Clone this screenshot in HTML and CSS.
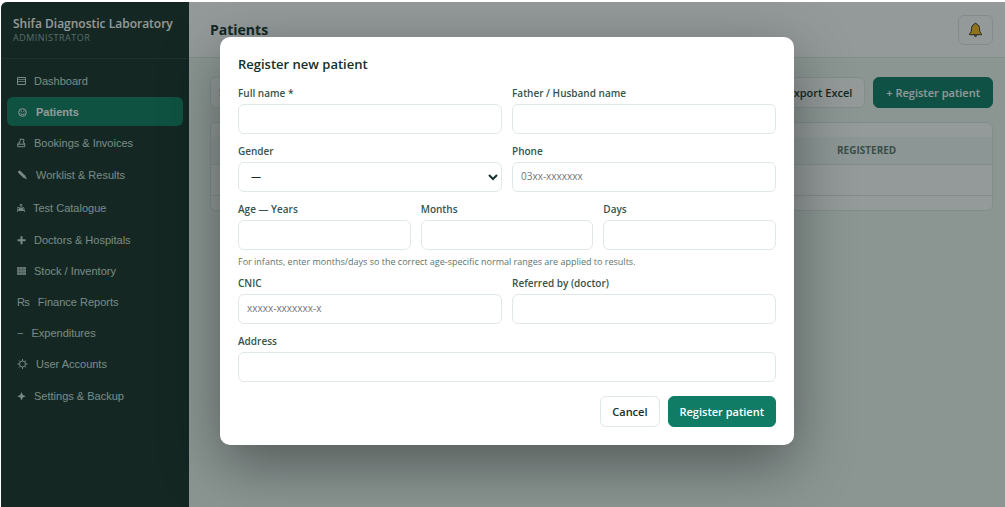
FILE: index.html
```
<!DOCTYPE html>
<html lang="en">
<head>
    <meta charset="UTF-8">
    <meta name="viewport" content="width=device-width, initial-scale=1.0">
    <title>Patients - Shifa Diagnostic Laboratory</title>
    <link rel="stylesheet" href="styles.css">
</head>
<body>
    <div class="app">
        <aside class="sidebar">
            <div class="brand">
                <div class="brand-name">Shifa Diagnostic Laboratory</div>
                <div class="brand-role">Administrator</div>
            </div>
            <nav class="nav">
                <a href="#" class="nav-link">
                    <svg width="9" height="10" viewBox="0 0 9 10" fill="none" stroke="currentColor"><path d="M.5 1.500h8v7h-8z"/><path d="M1 3.500h7M1 5.500h7" stroke-opacity=".75"/></svg>
                    Dashboard
                </a>
                <a href="#" class="nav-link active">
                    <svg width="11" height="10" viewBox="0 0 11 10" fill="none" stroke="currentColor"><circle cx="5.500" cy="5.500" r="3.800"/><path d="M3.500 6.300c.9 1.500 3.100 1.500 4 0"/><path d="M3.700 4.300h1M6.300 4.300h1"/></svg>
                    Patients
                </a>
                <a href="#" class="nav-link">
                    <svg width="9" height="10" viewBox="0 0 9 10" fill="none" stroke="currentColor"><path d="M2.500 5.500l1-4.500 3.500.5-.8 4"/><path d="M2.300 4L.7 6v2.700h7V6L7 4.500M.7 6.200h7"/></svg>
                    Bookings &amp; Invoices
                </a>
                <a href="#" class="nav-link tall">
                    <svg width="11" height="10" viewBox="0 0 11 10" fill="currentColor"><path d="M1 1.200l2-.6 5.300 5.200L10 9.300 6.300 7.800 1.200 2.800z"/></svg>
                    Worklist &amp; Results
                </a>
                <a href="#" class="nav-link tall">
                    <svg width="8" height="10" viewBox="0 0 8 10" fill="none" stroke="currentColor" stroke-width=".8"><path d="M2.800 1.500h2.400M3.300 1.500v2.300L1.500 7.500h5L4.700 3.800V1.500M.3 4.500h2.200M1 4.500L.4 9M5.500 4.500h1.300L7.600 9"/><path d="M2.600 5.500h2.800l1 2H1.600z" fill="currentColor"/></svg>
                    Test Catalogue
                </a>
                <a href="#" class="nav-link">
                    <svg width="9" height="10" viewBox="0 0 9 10" fill="currentColor"><path d="M3.500 1.300h2v3h3v2h-3v3h-2v-3h-3v-2h3z"/></svg>
                    Doctors &amp; Hospitals
                </a>
                <a href="#" class="nav-link">
                    <svg width="9" height="10" viewBox="0 0 9 10"><path d="M0 1h9v8H0z" fill="currentColor" fill-opacity=".8"/><path d="M0 3.500h9M0 6.500h9M2.500 1v8M5.500 1v8" stroke="#182e29" stroke-opacity=".2" fill="none"/></svg>
                    Stock / Inventory
                </a>
                <a href="#" class="nav-link"><span>₨</span> Finance Reports</a>
                <a href="#" class="nav-link"><span>−</span> Expenditures</a>
                <a href="#" class="nav-link">
                    <svg width="11" height="10" viewBox="0 0 11 10" fill="none" stroke="currentColor"><circle cx="5.500" cy="5" r="3"/><path d="M5.500 0v2M5.500 8v2M.5 5h2M8.500 5h2M2 1.500l1.300 1.300M7.700 7.200L9 8.500M9 1.500L7.700 2.800M3.300 7.200L2 8.500"/></svg>
                    User Accounts
                </a>
                <a href="#" class="nav-link tall">
                    <svg width="9" height="10" viewBox="0 0 9 10" fill="currentColor"><path d="M4.500 1l1.300 3 3 1.300-3 1.300-1.300 3-1.300-3-3-1.300 3-1.300z"/></svg>
                    Settings &amp; Backup
                </a>
            </nav>
        </aside>

        <main class="main">
            <header class="topbar">
                <h1>Patients</h1>
                <button type="button" class="btn bell" aria-label="Notifications">
                    <svg width="15" height="16" viewBox="0 0 14 16"><path d="M7 1.200c.9 0 1.200.5 1.200 1.200 2 .6 2.800 2.200 2.800 4.300 0 2.600.5 4 2 5v1H1v-1c1.500-1 2-2.400 2-5 0-2.100.8-3.700 2.800-4.300 0-.7.3-1.200 1.200-1.200z" fill="#fcb81b" stroke="#33302a"/><path d="M5.500 13.200h3c0 1-.6 1.600-1.500 1.600s-1.500-.6-1.500-1.600z" fill="#33302a"/></svg>
                </button>
            </header>
            <div class="content">
                <div class="toolbar">
                    <input type="search" class="search" placeholder="Search patients" aria-label="Search patients">
                    <button type="button" class="btn">Export Excel</button>
                    <button type="button" class="btn btn-primary">+ Register patient</button>
                </div>
                <div class="card">
                    <table>
                        <thead>
                            <tr><th></th><th></th><th></th><th class="col-date">Registered</th></tr>
                        </thead>
                        <tbody>
                            <tr><td colspan="4"></td></tr>
                        </tbody>
                    </table>
                </div>
            </div>
        </main>

        <!-- Register patient dialog -->
        <div class="overlay">
            <form class="modal" role="dialog" aria-labelledby="modalTitle">
                <h2 id="modalTitle">Register new patient</h2>
                <div class="row">
                    <div class="field">
                        <label for="fullName">Full name *</label>
                        <input type="text" id="fullName">
                    </div>
                    <div class="field">
                        <label for="fatherName">Father / Husband name</label>
                        <input type="text" id="fatherName">
                    </div>
                </div>
                <div class="row">
                    <div class="field">
                        <label for="gender">Gender</label>
                        <select id="gender">
                            <option>—</option>
                            <option>Male</option>
                            <option>Female</option>
                        </select>
                    </div>
                    <div class="field">
                        <label for="phone">Phone</label>
                        <input type="text" id="phone" placeholder="03xx-xxxxxxx">
                    </div>
                </div>
                <div class="row">
                    <div class="field">
                        <label for="years">Age — Years</label>
                        <input type="text" id="years">
                    </div>
                    <div class="field">
                        <label for="months">Months</label>
                        <input type="text" id="months">
                    </div>
                    <div class="field">
                        <label for="days">Days</label>
                        <input type="text" id="days">
                    </div>
                </div>
                <p class="hint">For infants, enter months/days so the correct age-specific normal ranges are applied to results.</p>
                <div class="row">
                    <div class="field">
                        <label for="cnic">CNIC</label>
                        <input type="text" id="cnic" placeholder="xxxxx-xxxxxxx-x">
                    </div>
                    <div class="field">
                        <label for="referred">Referred by (doctor)</label>
                        <input type="text" id="referred">
                    </div>
                </div>
                <div class="row">
                    <div class="field">
                        <label for="address">Address</label>
                        <input type="text" id="address">
                    </div>
                </div>
                <div class="actions">
                    <button type="button" class="btn">Cancel</button>
                    <button type="submit" class="btn btn-primary">Register patient</button>
                </div>
            </form>
        </div>
    </div>
</body>
</html>
```
FILE: styles.css
```
* {
    box-sizing: border-box;
}
body {
    margin: 0;
    padding: 2px 0 0 1px;
    background: #fff;
    color: #14302a;
    font-family: "Open Sans", "Noto Sans", sans-serif;
    font-size: 11px;
}
h1, h2, p {
    margin: 0;
}
button, input, select {
    font: inherit;
    color: inherit;
}
.app {
    display: flex;
    position: relative;
    min-height: calc(100vh - 2px);
    border-radius: 6px 0 0 0;
    overflow: hidden;
    background: #f0f7f4;
}

/* Sidebar */
.sidebar {
    flex: 0 0 188px;
    min-width: 0;
    background: #182e29;
    color: #d1e0db;
}
.brand {
    padding: 14px 12px 15px;
    border-bottom: 1px solid #2b413c;
}
.brand-name {
    font-size: 12px;
    line-height: 16px;
    font-weight: 600;
    color: #fff;
    white-space: nowrap;
}
.brand-role {
    font-size: 9px;
    line-height: 11px;
    letter-spacing: 0.5px;
    text-transform: uppercase;
    color: #94aea6;
}
.nav {
    display: flex;
    flex-direction: column;
    gap: 2px;
    padding: 7px 6px;
    font-family: "Liberation Sans", Arial, sans-serif;
    font-size: 11px;
}
.nav-link {
    display: flex;
    align-items: center;
    gap: 8px;
    min-height: 29px;
    padding: 0 10px;
    border-radius: 6px;
    color: inherit;
    text-decoration: none;
}
.nav-link.tall {
    min-height: 31px;
}
.nav-link.active {
    background: #107c62;
    color: #fff;
    font-weight: 700;
}

/* Page */
.main {
    flex: 1;
    min-width: 0;
}
.topbar {
    display: flex;
    align-items: center;
    justify-content: space-between;
    height: 56px;
    padding: 0 12px 0 21px;
    background: #fff;
    border-bottom: 1px solid #dfe8e5;
}
.topbar h1 {
    font-size: 14px;
    font-weight: 700;
}
.content {
    padding: 19px 12px 0 21px;
}
.toolbar {
    display: flex;
    gap: 8px;
    margin-bottom: 14px;
}
.search {
    width: 260px;
    margin-right: auto;
}
.btn {
    height: 31px;
    padding: 0 11px;
    border: 1px solid #dfe8e5;
    border-radius: 6px;
    background: #fff;
    font-size: 11px;
    font-weight: 600;
    cursor: pointer;
}
.btn-primary {
    border-color: #107c66;
    background: #107c66;
    color: #fff;
}
.toolbar .btn {
    padding: 0 12px;
}
.bell {
    display: flex;
    align-items: center;
    height: 30px;
    padding: 0 9px;
}
.card {
    padding: 14px 0;
    background: #fff;
    border: 1px solid #dfe8e5;
    border-radius: 6px;
}
table {
    width: 100%;
    border-collapse: collapse;
}
th {
    height: 27px;
    padding: 0 9px;
    background: #f3f9f7;
    border-bottom: 1px solid #dfe8e5;
    color: #5d756d;
    font-size: 10px;
    font-weight: 700;
    text-align: left;
    text-transform: uppercase;
}
.col-date {
    width: 21%;
}
td {
    height: 31px;
    border-bottom: 1px solid #dfe8e5;
}

/* Dialog */
.overlay {
    position: absolute;
    inset: 0;
    display: flex;
    align-items: flex-start;
    justify-content: center;
    padding: 35px 0 0 8px;
    background: rgba(15, 31, 28, 0.45);
}
.modal {
    width: 100%;
    max-width: 574px;
    padding: 18px;
    border-radius: 10px;
    background: #fff;
    box-shadow: 0 20px 60px rgba(0, 0, 0, 0.4);
}
.modal h2 {
    margin-bottom: 3px;
    font-size: 13px;
    line-height: 18px;
    font-weight: 600;
}
.row {
    display: flex;
    gap: 10px;
    padding-top: 10px;
}
.field {
    flex: 1;
    min-width: 0;
}
.field label {
    display: block;
    margin-bottom: 3px;
    color: #35544b;
    font-size: 10px;
    line-height: 15px;
    font-weight: 600;
}
input, select {
    height: 30px;
    padding: 0 8px 2px;
    border: 1px solid #dfe8e5;
    border-radius: 6px;
    background: #fff;
    font-size: 10px;
}
.search {
    height: 31px;
}
.field input, .field select {
    display: block;
    width: 100%;
}
.hint {
    margin: 4px 0 -4px;
    color: #5d756d;
    font-size: 9px;
    line-height: 16px;
}
.actions {
    display: flex;
    justify-content: flex-end;
    gap: 8px;
    margin-top: 14px;
}
```
